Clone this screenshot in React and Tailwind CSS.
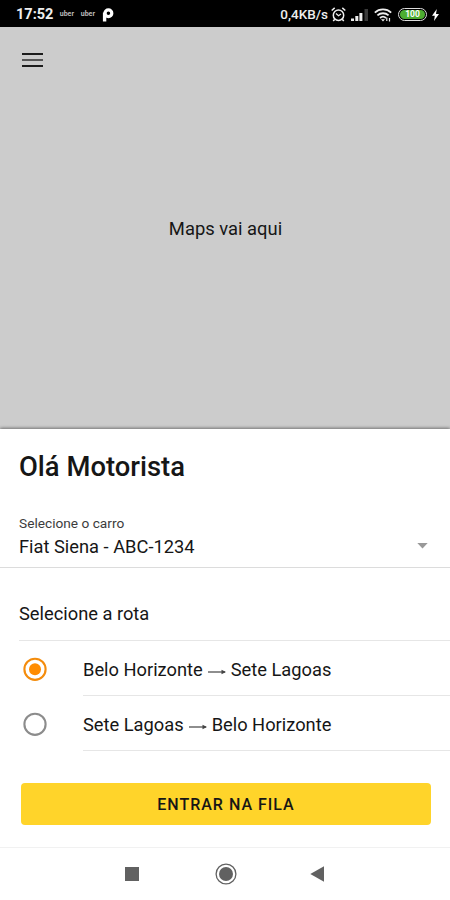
import { useState } from 'react';

const ROUTES = [
  { id: 'bh-sl', from: 'Belo Horizonte', to: 'Sete Lagoas' },
  { id: 'sl-bh', from: 'Sete Lagoas', to: 'Belo Horizonte' },
];

export default function App() {
  const [route, setRoute] = useState('bh-sl');

  return (
    <div className="flex h-[900px] w-[450px] flex-col overflow-hidden bg-white font-['Roboto',sans-serif] text-[#161616]">
      <StatusBar />

      <main className="flex h-[402px] flex-col bg-[#cccccc]">
        <header className="flex h-[66px] shrink-0 items-center pl-[22px]">
          <button type="button" aria-label="Menu">
            <MenuIcon />
          </button>
        </header>
        <p className="mt-[122px] pl-px text-center text-[18.4px] leading-[28px]">Maps vai aqui</p>
      </main>

      <section className="relative flex h-[418px] flex-col bg-white shadow-[0_-1px_3px_rgba(0,0,0,0.45)]">
        <h1 className="mt-[21px] pl-[19px] text-[27.4px] font-medium leading-[34px]">Olá Motorista</h1>

        <div className="mt-[30px] flex h-[54px] items-start border-b border-[#dcdcdc] pl-[19px] pr-[22px]">
          <div className="flex-1">
            <p className="text-[13.7px] leading-[18px] text-[#3c3c3c]">Selecione o carro</p>
            <p className="mt-[3px] text-[18.3px] leading-[24px]">Fiat Siena - ABC-1234</p>
          </div>
          <svg className="mt-[29px] h-[6px] w-[11px]" viewBox="0 0 11 6" fill="#999999">
            <path d="M0.3 0h10.4L5.5 5.6z" />
          </svg>
        </div>

        <h2 className="ml-[19px] h-[73px] border-b border-[#e6e6e6] pt-[33px] text-[18.3px] leading-[26px]">
          Selecione a rota
        </h2>

        {ROUTES.map((item) => (
          <RouteOption
            key={item.id}
            item={item}
            checked={item.id === route}
            onSelect={() => setRoute(item.id)}
          />
        ))}

        <button
          type="button"
          className="ml-[21px] mr-[19px] mt-[32px] h-[42px] rounded-[4px] bg-[#ffd42a] pt-px text-[16px] font-medium tracking-[1px]"
        >
          ENTRAR NA FILA
        </button>
      </section>

      <NavigationBar />
    </div>
  );
}

function RouteOption({ item, checked, onSelect }) {
  return (
    <label className="flex h-[55px] items-stretch pl-[23px]">
      <input type="radio" name="route" className="sr-only" checked={checked} onChange={onSelect} />
      <span className="flex w-[60px] items-center pt-px">
        <RadioIcon checked={checked} />
      </span>
      <span className="flex flex-1 items-center border-b border-[#e6e6e6] pt-[3px] text-[18.3px]">
        {item.from}
        <svg className="mx-[5px] mt-[5px] h-[8px] w-[18px]" viewBox="0 0 18 8" fill="none" stroke="#444444">
          <path d="M0 4h17" strokeWidth="1.2" />
          <path d="M13.5 1.8l4.5 2.2-4.5 2.2z" fill="#444444" stroke="none" />
        </svg>
        {item.to}
      </span>
    </label>
  );
}

function RadioIcon({ checked }) {
  return (
    <svg className="h-[24px] w-[24px]" viewBox="0 0 24 24" fill="none">
      <circle cx="12" cy="12.3" r="10.6" stroke={checked ? '#f48c0c' : '#8c8c8c'} strokeWidth="2.1" />
      {checked && <circle cx="12" cy="12.3" r="6" fill="#ff8c00" />}
    </svg>
  );
}

function MenuIcon() {
  return (
    <svg className="h-[16px] w-[21px]" viewBox="0 0 21 16" fill="none" strokeWidth="2">
      <path d="M0 2h21M0 14h21" stroke="#1c1c1c" />
      <path d="M0 8h21" stroke="#555555" />
    </svg>
  );
}

function StatusBar() {
  return (
    <div className="flex h-[27px] shrink-0 items-center bg-black pl-[16px] pr-[11px] pt-[2px] text-[#eeeeee]">
      <span className="text-[14.5px] font-bold">17:52</span>
      <span className="ml-[6px] w-[15px] text-center text-[7px] font-bold leading-none text-[#bbbbbb]">uber</span>
      <span className="ml-[6px] w-[15px] text-center text-[7px] font-bold leading-none text-[#bbbbbb]">uber</span>
      <svg className="ml-[7px] h-[14px] w-[12px]" viewBox="0 0 12 14" fill="none" stroke="#ffffff">
        <circle cx="6.4" cy="5.3" r="3.4" strokeWidth="3.2" />
        <path d="M2.6 4.5v9" strokeWidth="3.4" />
      </svg>

      <span className="ml-auto text-[13.5px] font-medium">0,4KB/s</span>
      <AlarmIcon />
      <SignalIcon />
      <WifiIcon />
      <span className="ml-[6px] flex h-[13px] w-[29px] items-center justify-center rounded-full border border-[#dddddd] p-px">
        <span className="flex h-full w-full items-center justify-center rounded-full bg-[#4cad31] text-[8.5px] font-bold leading-none text-white">
          100
        </span>
      </span>
      <svg className="ml-[5px] h-[12px] w-[7px]" viewBox="0 0 7 12" fill="#ffffff">
        <path d="M4.8 0L0 6.8h2.8L2 12l5-7H4z" />
      </svg>
    </div>
  );
}

function AlarmIcon() {
  return (
    <svg className="ml-[3px] h-[15px] w-[15px]" viewBox="0 0 15 15" fill="none" stroke="#eeeeee" strokeWidth="1.5">
      <circle cx="7.5" cy="8.2" r="5.2" />
      <path d="M5 6.5l2.5 2.3L10 6.9" strokeWidth="1.2" />
      <path d="M0.7 3.5l3-2.6M14.3 3.5l-3-2.6M3.8 12.2l-1.6 1.9M11.2 12.2l1.6 1.9" />
    </svg>
  );
}

function SignalIcon() {
  return (
    <svg className="ml-[5px] h-[12px] w-[18px]" viewBox="0 0 18 12" fill="#eeeeee">
      <rect x="0" y="9.5" width="3" height="2.5" />
      <rect x="4.3" y="7" width="3" height="5" />
      <rect x="8.4" y="4" width="3" height="8" />
      <rect x="13.5" y="0" width="3.5" height="12" fill="#3a3a3a" />
    </svg>
  );
}

function WifiIcon() {
  return (
    <svg className="ml-[5px] h-[14px] w-[18px]" viewBox="0 0 18 14" fill="none" stroke="#eeeeee" strokeWidth="1.8">
      <path d="M0.8 4.6c4.6-4.2 11.8-4.2 16.4 0" />
      <path d="M3.4 7.4c3.2-2.9 8-2.9 11.2 0" />
      <path d="M6 10c1.8-1.6 4.2-1.6 6 0" />
      <path d="M7 11.2h4l-2 2.3z" fill="#eeeeee" stroke="none" />
      <path d="M12.8 9.5v3.5M15.5 10v3.5" strokeWidth="1.2" />
    </svg>
  );
}

function NavigationBar() {
  return (
    // relative keeps the bar above the sheet's shadow
    <nav className="relative flex h-[53px] items-center border-t border-[#f1f1f1] bg-white pl-[125px]">
      <span className="h-[14px] w-[14px] bg-[#616161]" />
      <svg className="ml-[76px] h-[22px] w-[22px]" viewBox="0 0 22 22" fill="none">
        <circle cx="11" cy="11" r="9.9" stroke="#616161" strokeWidth="1.3" />
        <circle cx="11" cy="11" r="7" fill="#616161" />
      </svg>
      <svg className="ml-[73px] h-[16px] w-[14px]" viewBox="0 0 14 16" fill="#616161">
        <path d="M14 0.3v15.4L0.3 8z" />
      </svg>
    </nav>
  );
}
